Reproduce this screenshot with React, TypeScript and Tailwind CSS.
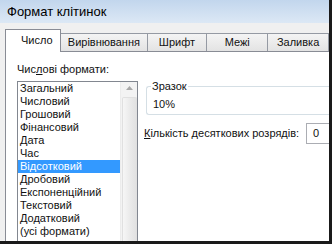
import React from 'react';

const formats = [
  'Загальний',
  'Числовий',
  'Грошовий',
  'Фінансовий',
  'Дата',
  'Час',
  'Відсотковий',
  'Дробовий',
  'Експоненційний',
  'Текстовий',
  'Додатковий',
  '(усі формати)',
];

const tabs = ['Вирівнювання', 'Шрифт', 'Межі', 'Заливка'];
const tabWidths = ['w-[88px]', 'w-[61px]', 'w-[62px]', 'w-[62px]'];

const App = () => {
  const selected = 'Відсотковий';

  return (
    <div className="w-[332px] h-[244px] overflow-hidden bg-[#f0f0f0] border-r-[3px] border-b-[3px] border-[#1a1a1a] font-['Liberation_Sans',Arial,sans-serif] text-[11px] text-[#111] flex flex-col">
      {/* title bar */}
      <div className="h-[23px] shrink-0 bg-gradient-to-b from-[#c2d6ed] to-[#dce8f5] pl-[7px] text-[13px] leading-[24px] text-black">
        Формат клітинок
      </div>

      <div className="flex-1 flex flex-col pl-[5px] pt-[5px]">
        {/* tabs */}
        <div className="flex items-end h-[23px] relative z-10">
          <div className="w-[57px] h-[23px] bg-white border border-b-0 border-[#898c95] flex items-center pl-[15px] -mb-px pb-[2px]">
            Число
          </div>
          {tabs.map((t, i) => (
            <div
              key={t}
              className={`${tabWidths[i]} h-[18px] bg-gradient-to-b from-[#f4f4f4] to-[#e3e3e3] border border-b-0 border-l-0 border-[#959aa3] flex items-center justify-center`}
            >
              {t}
            </div>
          ))}
        </div>

        {/* panel */}
        <div className="flex-1 bg-white border border-[#898c95] border-r-0 border-b-0 flex pl-[11px] pt-[10px]">
          <div className="flex flex-col w-[121px] shrink-0">
            <div className="h-[14px] leading-[14px] mb-[5px]">
              Чис<span className="underline">л</span>ові формати:
            </div>
            <div className="flex-1 border border-[#828790] border-b-0 flex">
              <div className="flex-1 flex flex-col">
                {formats.map((f) => (
                  <div
                    key={f}
                    className={`h-[13px] leading-[13px] pl-[2px] ${
                      f === selected ? 'bg-[#3399ff] text-white' : ''
                    }`}
                  >
                    {f}
                  </div>
                ))}
              </div>
              <div className="w-[17px] shrink-0 bg-[#f3f3f3] border-l border-[#ececec] flex flex-col items-center">
                <svg width="7" height="4" viewBox="0 0 7 4" className="mt-[4px]">
                  <path d="M0 4 L3.5 0 L7 4 Z" fill="#a8a8a8" />
                </svg>
                <div className="mt-[7px] w-[15px] flex-1 bg-gradient-to-r from-[#f6f6f6] via-[#ebebeb] to-[#e2e2e2] border border-[#e0e0e0] border-b-0 rounded-t-[2px]" />
              </div>
            </div>
          </div>

          <div className="flex-1 flex flex-col pl-[6px] pt-[17px]">
            <fieldset className="ml-[2px] border border-[#d5dfe5] rounded-[3px] h-[36px] pl-[4px] border-r-0 rounded-r-none">
              <legend className="px-[1px] text-[11px] leading-[14px]">Зразок</legend>
              <div className="leading-[14px] pt-[4px] pl-[2px]">10%</div>
            </fieldset>
            <div className="flex items-center mt-[8px]">
              <span className="w-[162px] shrink-0">
                <span className="underline">К</span>ількість десяткових розрядів:
              </span>
              <div className="h-[21px] flex-1 border border-r-0 border-[#abadb3] pl-[6px] flex items-center">0</div>
            </div>
          </div>
        </div>
      </div>
    </div>
  );
};

export default App;
